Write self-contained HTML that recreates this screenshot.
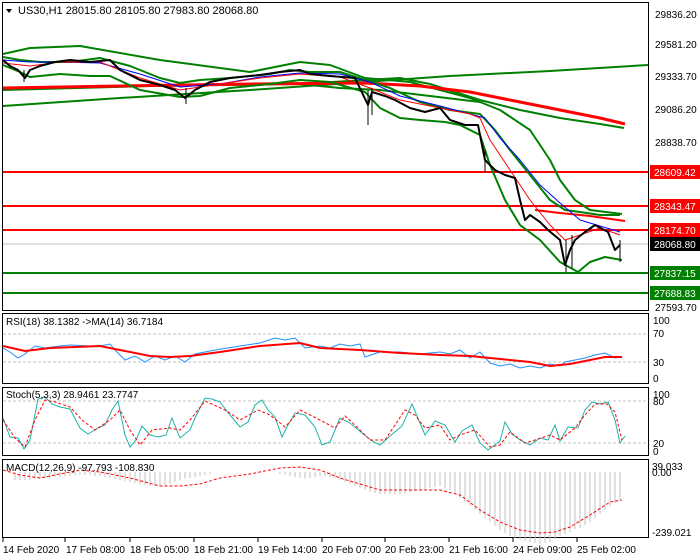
<!DOCTYPE html>
<html><head><meta charset="utf-8"><style>
html,body{margin:0;padding:0;background:#fff;}
svg{display:block;font-family:"Liberation Sans",sans-serif;}
</style></head><body>
<svg width="700" height="560" viewBox="0 0 700 560" xmlns="http://www.w3.org/2000/svg">
<rect width="700" height="560" fill="#fff"/>
<g fill="none" stroke="#000" stroke-width="1">
<rect x="2.5" y="2.5" width="646" height="308"/>
<rect x="2.5" y="313.5" width="646" height="70"/>
<rect x="2.5" y="387.5" width="646" height="68"/>
<rect x="2.5" y="459.5" width="646" height="78"/>
</g>
<g fill="none" stroke-linejoin="round">
<line x1="3" y1="172" x2="648" y2="172" stroke="#f00" stroke-width="2"/>
<line x1="3" y1="206" x2="648" y2="206" stroke="#f00" stroke-width="2"/>
<line x1="3" y1="230" x2="648" y2="230" stroke="#f00" stroke-width="2"/>
<line x1="3" y1="244" x2="648" y2="244" stroke="#c0c0c0" stroke-width="1"/>
<line x1="3" y1="273" x2="648" y2="273" stroke="#008000" stroke-width="2"/>
<line x1="3" y1="293" x2="648" y2="293" stroke="#008000" stroke-width="2"/>
<polyline stroke="#008000" stroke-width="2" points="3,106 120,98 250,90 365,82 450,76 550,71 648,65"/>
<polyline stroke="#008000" stroke-width="2" points="3,90 150,86 300,84 365,80 400,78 430,84 480,100 520,110 560,118 600,124 624,128"/>
<polyline stroke="#008000" stroke-width="2" points="3,54 30,48 80,46 160,60 250,72 300,62 330,65 365,78 410,82 440,90 470,98 500,110 530,130 550,160 560,180 575,200 590,210 622,214"/>
<polyline stroke="#008000" stroke-width="2" points="300,84 340,88 380,90 430,96 480,102"/>
<polyline stroke="#f00" stroke-width="3" points="3,88 120,86 250,84 365,83 420,86 470,92 520,102 560,110 600,118 625,124"/>
<polyline stroke="#f00" stroke-width="2" points="535,210 560,213 590,216 625,221"/>
<polyline stroke="#008000" stroke-width="2" points="3,57 20,60 40,62 70,62 100,58 130,66 160,78 180,83 200,80 230,78 270,74 290,70 310,72 340,72 365,80 390,88 420,102 450,110 480,114 495,130 510,150 530,175 550,200 565,210 580,212 600,215 620,215"/>
<polyline stroke="#008000" stroke-width="2" points="3,65 20,72 30,77 40,76 60,74 90,76 110,76 140,90 180,97 200,96 230,88 270,84 300,80 330,82 365,92 380,108 400,118 420,120 445,122 460,125 480,135 490,165 505,200 520,225 540,240 560,262 578,272 590,262 605,257 622,260"/>
<polyline stroke="#00f" stroke-width="1" points="3,60 30,62 60,62 100,63 140,74 180,87 220,84 260,77 300,73 340,74 370,82 400,96 440,106 470,114 485,118 500,138 520,160 540,185 560,203 580,220 600,226 620,232"/>
<polyline stroke="#f00" stroke-width="1" points="3,63 30,66 60,62 100,62 140,78 180,90 220,84 260,78 300,74 340,77 370,88 400,100 440,108 470,114 480,118 490,140 510,170 530,200 550,225 565,240 580,235 600,228 620,235"/>
<polyline stroke="#000" stroke-width="2" points="3,60 10,66 18,70 25,78 30,70 40,66 55,62 70,60 90,62 110,60 120,70 140,80 160,85 175,90 185,98 195,90 210,82 230,78 260,75 280,72 300,70 310,74 330,76 355,78 368,105 372,92 385,96 395,100 410,108 425,112 440,108 450,120 465,125 478,125 485,160 495,170 505,175 515,178 520,200 525,220 530,215 540,222 548,230 560,240 565,265 570,250 575,240 585,232 595,225 608,232 615,250 620,245"/>
<g stroke="#000" stroke-width="1">
<line x1="368" y1="90" x2="368" y2="125"/><line x1="372" y1="88" x2="372" y2="115"/>
<line x1="186" y1="88" x2="186" y2="104"/><line x1="24" y1="70" x2="24" y2="82"/>
<line x1="566" y1="240" x2="566" y2="272"/><line x1="572" y1="235" x2="572" y2="268"/>
<line x1="620" y1="240" x2="620" y2="262"/><line x1="485" y1="150" x2="485" y2="172"/>
</g>
</g>
<path d="M6 9 L12 9 L9 13 Z" fill="#000"/>
<text x="18" y="14" font-size="11" fill="#000">US30,H1  28015.80 28105.80 27983.80 28068.80</text>
<g font-size="10" fill="#000">
<text x="655" y="18">29836.20</text>
<text x="655" y="48">29581.20</text>
<text x="655" y="80">29333.70</text>
<text x="655" y="113">29086.20</text>
<text x="655" y="146">28838.70</text>
<text x="655" y="311">27593.70</text>
</g>
<g font-size="10" fill="#fff">
<rect x="650" y="165" width="50" height="14" fill="#f00"/><text x="654" y="176">28609.42</text>
<rect x="650" y="199" width="50" height="14" fill="#f00"/><text x="654" y="210">28343.47</text>
<rect x="650" y="223" width="50" height="14" fill="#f00"/><text x="654" y="234">28174.70</text>
<rect x="650" y="237" width="50" height="14" fill="#000"/><text x="654" y="248">28068.80</text>
<rect x="650" y="266" width="50" height="14" fill="#008000"/><text x="654" y="277">27837.15</text>
<rect x="650" y="286" width="50" height="14" fill="#008000"/><text x="654" y="297">27688.83</text>
</g>
<g fill="none">
<line x1="3" y1="334" x2="648" y2="334" stroke="#c0c0c0" stroke-dasharray="3,2"/>
<line x1="3" y1="362" x2="648" y2="362" stroke="#c0c0c0" stroke-dasharray="3,2"/>
<polyline stroke="#1e90ff" stroke-width="1" points="3,348 10,352 18,358 25,354 35,346 45,348 60,346 70,345 90,346 100,346 110,344 115,350 125,360 135,356 145,362 155,356 165,360 175,356 185,362 195,354 205,352 215,350 240,346 260,343 275,338 285,340 295,338 305,348 320,346 330,348 340,344 350,346 360,344 365,357 380,352 400,352 420,354 440,352 450,354 460,350 470,358 480,352 490,363 500,366 510,364 520,368 530,366 540,368 550,364 560,366 565,362 575,360 585,358 595,355 605,353 615,358 622,357"/>
<polyline stroke="#f00" stroke-width="2" points="3,346 25,351 50,348 100,346 120,350 150,356 170,357 190,356 220,352 260,346 300,343 320,348 360,350 400,353 440,355 470,356 490,358 510,360 530,362 550,366 570,364 590,360 605,357 622,357"/>
</g>
<g font-size="10" fill="#000">
<text x="6" y="325">RSI(18) 38.1382  -&gt;MA(14) 36.7184</text>
<text x="653" y="324">100</text><text x="653" y="337">70</text><text x="653" y="366">30</text><text x="653" y="382">0</text>
</g>
<g fill="none">
<line x1="3" y1="401" x2="648" y2="401" stroke="#c0c0c0" stroke-dasharray="3,2"/>
<line x1="3" y1="443" x2="648" y2="443" stroke="#c0c0c0" stroke-dasharray="3,2"/>
<polyline stroke="#20b2aa" stroke-width="1" points="3,418 10,437 18,438 24,449 30,440 38,399 45,397 52,404 60,407 70,409 80,428 88,434 98,428 105,425 112,410 118,401 125,435 130,447 136,440 142,426 150,435 158,437 166,435 172,418 180,438 190,430 195,418 205,398 212,399 220,402 230,415 240,427 248,422 255,405 262,400 268,410 275,417 282,437 288,425 295,413 305,415 315,427 322,445 330,442 340,418 350,423 362,433 372,441 380,445 390,436 402,426 412,404 420,423 425,435 435,421 445,425 455,442 462,431 472,425 480,443 488,450 500,441 505,422 512,434 520,440 530,445 540,438 548,440 555,425 560,441 568,427 578,428 585,410 592,402 600,404 608,402 615,420 620,443 625,436"/>
<polyline stroke="#f00" stroke-width="1" stroke-dasharray="3,2" points="3,420 15,438 25,447 35,420 45,400 55,402 70,407 82,420 95,430 110,420 120,410 130,430 140,445 152,430 170,428 180,430 190,420 205,401 225,410 240,420 258,410 270,415 285,427 300,410 320,420 335,428 345,416 358,428 370,440 385,440 395,425 405,410 415,415 425,428 440,425 450,440 460,435 475,430 490,447 500,445 510,432 525,443 535,440 550,435 560,440 575,428 585,415 595,404 607,404 615,412 622,440"/>
</g>
<g font-size="10" fill="#000">
<text x="6" y="398">Stoch(5,3,3) 28.9461 23.7747</text>
<text x="653" y="398">100</text><text x="653" y="405">80</text><text x="653" y="447">20</text><text x="653" y="455">0</text>
</g>
<g stroke="#c0c0c0" stroke-width="1">
<path d="M15 472v8M20 472v8M25 472v8M30 472v8M35 472v7M40 472v7M45 472v6M50 472v6M55 472v5M60 472v5M65 472v4M70 472v4M75 472v3M80 472v3M85 472v3M90 472v3M95 472v4M100 472v4M105 472v5M110 472v6M115 472v7M120 472v8M125 472v9M130 472v10M135 472v11M140 472v12M145 472v13M150 472v14M155 472v14M160 472v14M165 472v13M170 472v12M175 472v10M180 472v8M185 472v7M190 472v6M195 472v5M200 472v4M205 472v3M210 472v2M280 472v2M285 472v3M290 472v4M295 472v5M300 472v6M305 472v7M310 472v6M315 472v5M320 472v4M325 472v4M330 472v5M335 472v6M340 472v8M345 472v10M350 472v12M355 472v14M360 472v16M365 472v18M370 472v20M375 472v21M380 472v22M385 472v22M390 472v22M395 472v22M400 472v22M405 472v21M410 472v20M415 472v19M420 472v18M425 472v17M430 472v16M435 472v15M440 472v14M445 472v16M450 472v18M455 472v22M460 472v26M465 472v30M470 472v34M475 472v38M480 472v42M485 472v46M490 472v50M495 472v54M500 472v58M505 472v61M510 472v64M515 472v66M520 472v68M525 472v69M530 472v70M535 472v71M540 472v72M545 472v71M550 472v70M555 472v67M560 472v64M565 472v62M570 472v60M575 472v57M580 472v56M585 472v53M590 472v50M595 472v46M600 472v42M605 472v38M610 472v34M615 472v31M620 472v28"/>
</g>
<polyline fill="none" stroke="#f00" stroke-width="1" stroke-dasharray="3,2" points="3,470 20,475 40,478 60,474 80,470 100,472 130,478 160,486 180,486 200,484 220,478 250,474 280,468 300,467 320,470 340,478 360,484 380,490 400,490 420,490 440,490 460,495 480,510 500,522 520,530 540,533 555,532 570,527 590,515 610,502 622,500"/>
<g font-size="10" fill="#000">
<text x="6" y="471">MACD(12,26,9) -97.793 -108.830</text>
<text x="652" y="470">39.033</text><text x="652" y="476">0.00</text><text x="652" y="536">-239.021</text>
</g>
<g stroke="#000"><line x1="3" y1="538" x2="3" y2="542"/><line x1="65" y1="538" x2="65" y2="542"/><line x1="130" y1="538" x2="130" y2="542"/><line x1="194" y1="538" x2="194" y2="542"/><line x1="258" y1="538" x2="258" y2="542"/><line x1="322" y1="538" x2="322" y2="542"/><line x1="385" y1="538" x2="385" y2="542"/><line x1="449" y1="538" x2="449" y2="542"/><line x1="513" y1="538" x2="513" y2="542"/><line x1="577" y1="538" x2="577" y2="542"/></g>
<g font-size="10" fill="#000">
<text x="3" y="553">14 Feb 2020</text><text x="66" y="553">17 Feb 08:00</text><text x="130" y="553">18 Feb 05:00</text><text x="194" y="553">18 Feb 21:00</text><text x="258" y="553">19 Feb 14:00</text><text x="322" y="553">20 Feb 07:00</text><text x="385" y="553">20 Feb 23:00</text><text x="449" y="553">21 Feb 16:00</text><text x="513" y="553">24 Feb 09:00</text><text x="577" y="553">25 Feb 02:00</text>
</g>
</svg>
</body></html>
